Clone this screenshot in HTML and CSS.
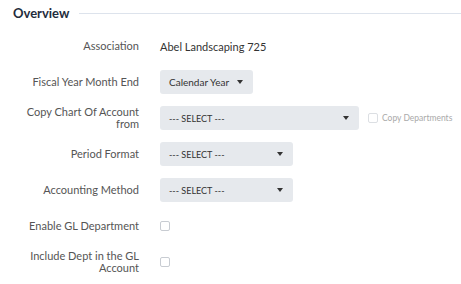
FILE: index.html
```html
<!DOCTYPE html>
<html lang="en">
<head>
  <meta charset="UTF-8">
  <title>Overview</title>
  <link rel="stylesheet" href="styles.css">
</head>
<body>
  <section class="overview">
    <div class="section-head">
      <h2>Overview</h2>
      <div class="rule"></div>
    </div>

    <div class="form">
      <div class="row">
        <label class="label">Association</label>
        <div class="value">Abel Landscaping 725</div>
      </div>

      <div class="row">
        <label class="label">Fiscal Year Month End</label>
        <div class="select w-sm"><span>Calendar Year</span><i class="caret"></i></div>
      </div>

      <div class="row">
        <label class="label">Copy Chart Of Account from</label>
        <div class="inline">
          <div class="select w-lg"><span class="upper">--- SELECT ---</span><i class="caret"></i></div>
          <label class="check muted"><span class="box"></span>Copy Departments</label>
        </div>
      </div>

      <div class="row">
        <label class="label">Period Format</label>
        <div class="select w-md"><span class="upper">--- SELECT ---</span><i class="caret"></i></div>
      </div>

      <div class="row">
        <label class="label">Accounting Method</label>
        <div class="select w-md"><span class="upper">--- SELECT ---</span><i class="caret"></i></div>
      </div>

      <div class="row">
        <label class="label">Enable GL Department</label>
        <span class="box"></span>
      </div>

      <div class="row">
        <label class="label">Include Dept in the GL Account</label>
        <span class="box"></span>
      </div>
    </div>
  </section>
</body>
</html>
```

FILE: styles.css
```css
body {
  margin: 0;
  font-family: Lato, "Open Sans", sans-serif;
  font-size: 11px;
  color: #333;
  background: #fff;
}
.overview {
  padding: 6px 0 0 13px;
}
.section-head {
  display: flex;
  align-items: center;
  gap: 10px;
  height: 14px;
}
.section-head h2 {
  margin: 0;
  font-size: 13px;
  font-weight: 700;
  color: #1f2d3d;
}
.rule {
  flex: 1;
  height: 1px;
  background: #dde3ec;
}
.form {
  padding-top: 8px;
}
.row {
  display: grid;
  grid-template-columns: 126px auto;
  column-gap: 21px;
  align-items: center;
  justify-items: start;
  height: 36px;
}
.label {
  justify-self: end;
  text-align: right;
  width: 118px;
  line-height: 12px;
  color: #555;
}
.value {
  color: #333;
}
.select {
  display: flex;
  align-items: center;
  justify-content: space-between;
  box-sizing: border-box;
  height: 24px;
  padding: 0 10px 0 9px;
  background: #e6e9ed;
  border-radius: 3px;
  font-size: 10px;
  color: #333;
}
.upper {
  font-size: 9px;
}
.w-sm { width: 93px; }
.w-md { width: 133px; }
.w-lg { width: 199px; }
.caret {
  width: 0;
  height: 0;
  border-left: 3px solid transparent;
  border-right: 3px solid transparent;
  border-top: 4px solid #333;
}
.inline {
  display: flex;
  align-items: center;
  gap: 9px;
}
.check {
  display: flex;
  align-items: center;
  gap: 4px;
  font-size: 8.5px;
}
.muted {
  color: #aaa;
}
.box {
  display: inline-block;
  box-sizing: border-box;
  width: 10px;
  height: 10px;
  border: 1px solid #c8ccd2;
  border-radius: 2px;
  background: #fff;
}
.muted .box {
  border-color: #dcdfe3;
}
```
